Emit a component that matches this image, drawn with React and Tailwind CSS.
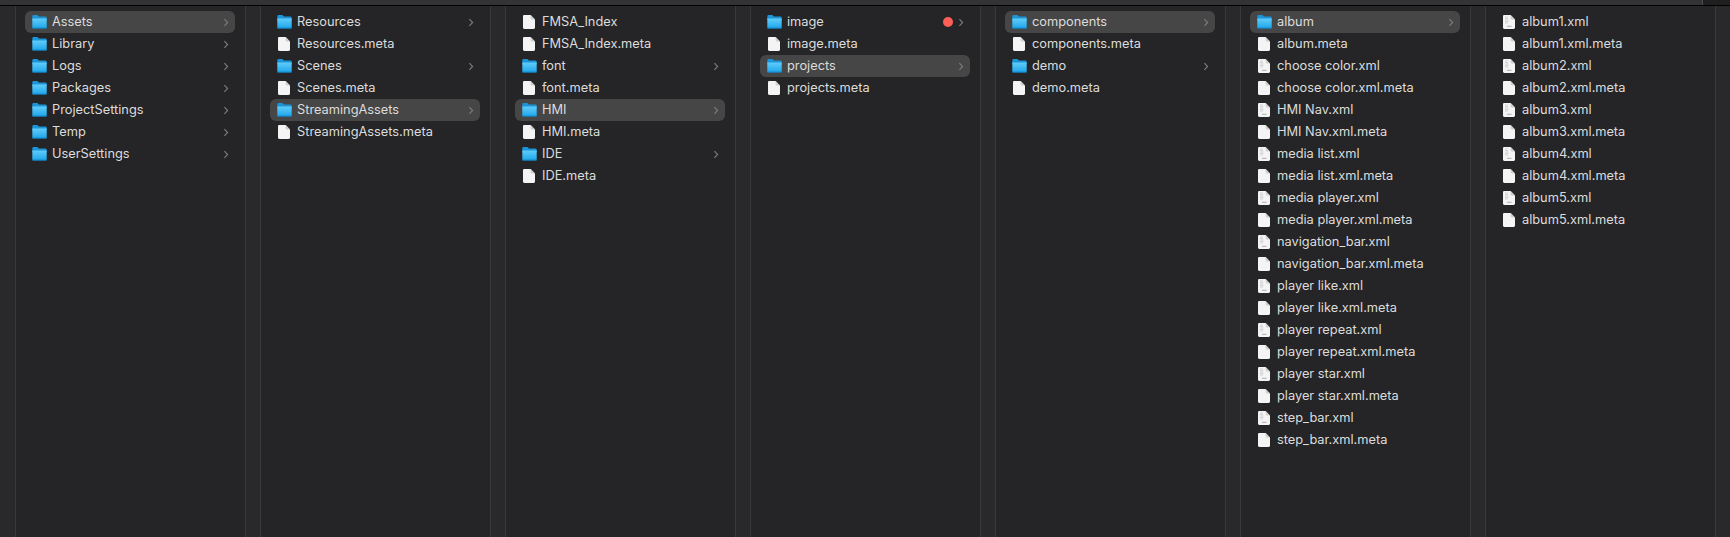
import React from 'react';

const FolderIcon = () => (
  <svg width="15" height="14" viewBox="0 0 15 14" className="shrink-0">
    <defs>
      <linearGradient id="folderBody" x1="0" y1="0" x2="0" y2="1">
        <stop offset="0" stopColor="#62cdfa" />
        <stop offset="1" stopColor="#1ca5ea" />
      </linearGradient>
    </defs>
    <path d="M0.3 1.6C0.3 0.6 0.8 0.1 1.8 0.1H5C5.7 0.1 6 0.4 6.4 0.9L7 1.6H13.2C14.2 1.6 14.7 2.1 14.7 3.1V5H0.3Z" fill="#1b94d8" />
    <path d="M0.3 3.4H14.7V12.2C14.7 13 14.2 13.5 13.4 13.5H1.6C0.8 13.5 0.3 13 0.3 12.2Z" fill="url(#folderBody)" />
    <rect x="0.3" y="12.7" width="14.4" height="0.8" fill="#0f78b8" />
  </svg>
);

const FileIcon = ({ xml }) => (
  <svg width="12" height="14" viewBox="0 0 12 14" className="-ml-px shrink-0">
    <path d="M0 1.4C0 0.5 0.5 0 1.4 0H7.6L12 4.4V12.6C12 13.5 11.5 14 10.6 14H1.4C0.5 14 0 13.5 0 12.6Z" fill="#f4f4f4" />
    <path d="M7.6 0V3C7.6 3.9 8.1 4.4 9 4.4H12Z" fill="#cfcfcf" />
    {xml && (
      <>
        <path d="M2 2H5M2 3.5H5M2 5H5.5M2 6.5H5.5M2 8H5" stroke="#cdcdcd" strokeWidth="0.8" />
        <rect x="4" y="10.8" width="4.5" height="1" fill="#adadad" />
      </>
    )}
  </svg>
);

const Row = ({ name, folder, selected, dot }) => (
  <div className={`flex h-[22px] items-center rounded-[6px] pl-[7px] pr-[6px] ${selected ? 'bg-[#464646]' : ''}`}>
    <div className="flex w-[15px] justify-center">
      {folder ? <FolderIcon /> : <FileIcon xml={name.endsWith('.xml')} />}
    </div>
    <span className="ml-[5px] flex-1 truncate pb-[1px] text-[12.8px] leading-[20px] text-[#dcdcdc]">{name}</span>
    {dot && <span className="mr-[5px] h-[10px] w-[10px] rounded-full bg-[#fb5f57]" />}
    {folder && (
      <svg width="6" height="9" viewBox="0 0 6 9" className="shrink-0">
        <path d="M1.4 1.2L4.6 4.5L1.4 7.8" fill="none" stroke="#7d7d7f" strokeWidth="1.1" />
      </svg>
    )}
  </div>
);

const columns = [
  [
    { name: 'Assets', folder: true, selected: true },
    { name: 'Library', folder: true },
    { name: 'Logs', folder: true },
    { name: 'Packages', folder: true },
    { name: 'ProjectSettings', folder: true },
    { name: 'Temp', folder: true },
    { name: 'UserSettings', folder: true },
  ],
  [
    { name: 'Resources', folder: true },
    { name: 'Resources.meta' },
    { name: 'Scenes', folder: true },
    { name: 'Scenes.meta' },
    { name: 'StreamingAssets', folder: true, selected: true },
    { name: 'StreamingAssets.meta' },
  ],
  [
    { name: 'FMSA_Index' },
    { name: 'FMSA_Index.meta' },
    { name: 'font', folder: true },
    { name: 'font.meta' },
    { name: 'HMI', folder: true, selected: true },
    { name: 'HMI.meta' },
    { name: 'IDE', folder: true },
    { name: 'IDE.meta' },
  ],
  [
    { name: 'image', folder: true, dot: true },
    { name: 'image.meta' },
    { name: 'projects', folder: true, selected: true },
    { name: 'projects.meta' },
  ],
  [
    { name: 'components', folder: true, selected: true },
    { name: 'components.meta' },
    { name: 'demo', folder: true },
    { name: 'demo.meta' },
  ],
  [
    { name: 'album', folder: true, selected: true },
    { name: 'album.meta' },
    { name: 'choose color.xml' },
    { name: 'choose color.xml.meta' },
    { name: 'HMI Nav.xml' },
    { name: 'HMI Nav.xml.meta' },
    { name: 'media list.xml' },
    { name: 'media list.xml.meta' },
    { name: 'media player.xml' },
    { name: 'media player.xml.meta' },
    { name: 'navigation_bar.xml' },
    { name: 'navigation_bar.xml.meta' },
    { name: 'player like.xml' },
    { name: 'player like.xml.meta' },
    { name: 'player repeat.xml' },
    { name: 'player repeat.xml.meta' },
    { name: 'player star.xml' },
    { name: 'player star.xml.meta' },
    { name: 'step_bar.xml' },
    { name: 'step_bar.xml.meta' },
  ],
  [
    { name: 'album1.xml' },
    { name: 'album1.xml.meta' },
    { name: 'album2.xml' },
    { name: 'album2.xml.meta' },
    { name: 'album3.xml' },
    { name: 'album3.xml.meta' },
    { name: 'album4.xml' },
    { name: 'album4.xml.meta' },
    { name: 'album5.xml' },
    { name: 'album5.xml.meta' },
  ],
];

export default function App() {
  return (
    <div className="flex h-[537px] w-[1730px] flex-col overflow-hidden bg-[#29292b] font-['Inter',sans-serif]">
      <div className="flex h-[6px] shrink-0 border-b border-black bg-[#333335]">
        <div className="flex-1" />
        <div className="w-[28px] border-l border-[#48484a] bg-[#1f1f20]" />
      </div>
      <div className="flex flex-1 pl-[15px]">
        {columns.map((rows, i) => (
          <div key={i} className="flex w-[245px] shrink-0">
            <div className="w-[231px] shrink-0 border-x border-[#39393b] bg-[#252527] pl-[9px] pr-[10px] pt-[5px]">
              {rows.map((row) => (
                <Row key={row.name} {...row} />
              ))}
            </div>
            <div className="flex-1" />
          </div>
        ))}
      </div>
    </div>
  );
}
